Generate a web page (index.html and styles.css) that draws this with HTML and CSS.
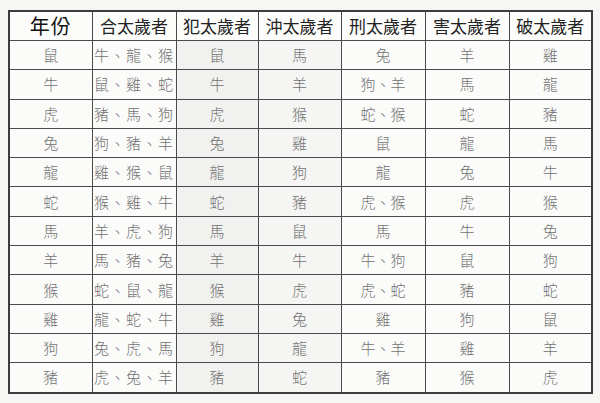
FILE: index.html
```html
<!DOCTYPE html>
<html lang="zh-Hant">
<head>
<meta charset="utf-8">
<link rel="stylesheet" href="styles.css">
</head>
<body>
<table class="tbl">
  <colgroup>
    <col class="c1"><col class="c2"><col class="c3"><col class="c4"><col class="c5"><col class="c6"><col class="c7">
  </colgroup>
  <thead>
    <tr class="head">
      <th class="year">年份</th><th>合太歲者</th><th>犯太歲者</th><th>沖太歲者</th><th>刑太歲者</th><th>害太歲者</th><th>破太歲者</th>
    </tr>
  </thead>
  <tbody>
    <tr><td>鼠</td><td class="multi">牛、龍、猴</td><td class="shade">鼠</td><td class="shade2">馬</td><td>兔</td><td>羊</td><td>雞</td></tr>
    <tr><td>牛</td><td class="multi">鼠、雞、蛇</td><td class="shade">牛</td><td class="shade2">羊</td><td>狗、羊</td><td>馬</td><td>龍</td></tr>
    <tr><td>虎</td><td class="multi">豬、馬、狗</td><td class="shade">虎</td><td class="shade2">猴</td><td>蛇、猴</td><td>蛇</td><td>豬</td></tr>
    <tr><td>兔</td><td class="multi">狗、豬、羊</td><td class="shade">兔</td><td class="shade2">雞</td><td>鼠</td><td>龍</td><td>馬</td></tr>
    <tr><td>龍</td><td class="multi">雞、猴、鼠</td><td class="shade">龍</td><td class="shade2">狗</td><td>龍</td><td>兔</td><td>牛</td></tr>
    <tr><td>蛇</td><td class="multi">猴、雞、牛</td><td class="shade">蛇</td><td class="shade2">豬</td><td>虎、猴</td><td>虎</td><td>猴</td></tr>
    <tr><td>馬</td><td class="multi">羊、虎、狗</td><td class="shade">馬</td><td class="shade2">鼠</td><td>馬</td><td>牛</td><td>兔</td></tr>
    <tr><td>羊</td><td class="multi">馬、豬、兔</td><td class="shade">羊</td><td class="shade2">牛</td><td>牛、狗</td><td>鼠</td><td>狗</td></tr>
    <tr><td>猴</td><td class="multi">蛇、鼠、龍</td><td class="shade">猴</td><td class="shade2">虎</td><td>虎、蛇</td><td>豬</td><td>蛇</td></tr>
    <tr><td>雞</td><td class="multi">龍、蛇、牛</td><td class="shade">雞</td><td class="shade2">兔</td><td>雞</td><td>狗</td><td>鼠</td></tr>
    <tr><td>狗</td><td class="multi">兔、虎、馬</td><td class="shade">狗</td><td class="shade2">龍</td><td>牛、羊</td><td>雞</td><td>羊</td></tr>
    <tr><td>豬</td><td class="multi">虎、兔、羊</td><td class="shade">豬</td><td class="shade2">蛇</td><td>豬</td><td>猴</td><td>虎</td></tr>
  </tbody>
</table>
</body>
</html>
```

FILE: styles.css
```css
html, body {
  margin: 0;
  padding: 0;
  background: #f6f6f4;
}
body {
  padding: 10px 0 0 8px;
}
.tbl {
  border-collapse: collapse;
  table-layout: fixed;
  width: 583px;
  border: 2px solid #3c3c3c;
  background: #fbfbfa;
  font-family: "Noto Sans CJK TC", "Noto Sans CJK SC", sans-serif;
}
.c1 { width: 83px; }
.c2 { width: 84px; }
.c3 { width: 82px; }
.c4 { width: 83px; }
.c5 { width: 84px; }
.c6 { width: 84px; }
.c7 { width: 83px; }
.tbl th, .tbl td {
  border: 1px solid #4a4a4a;
  text-align: center;
  padding: 0;
  overflow: hidden;
  white-space: nowrap;
}
.head th {
  height: 28px;
  font-size: 17px;
  font-weight: 400;
  color: #222;
  line-height: 28px;
  background: #fcfcfb;
}
.head th.year {
  font-size: 20px;
  letter-spacing: 1px;
  color: #111;
}
.tbl td {
  height: 28.3px;
  font-size: 15px;
  font-weight: 300;
  color: #727272;
  line-height: 28px;
}
.tbl td.multi {
  letter-spacing: 1px;
}
.tbl td.shade {
  background: #f1f1f0;
}
.tbl td.shade2 {
  background: #f5f5f4;
}
```
